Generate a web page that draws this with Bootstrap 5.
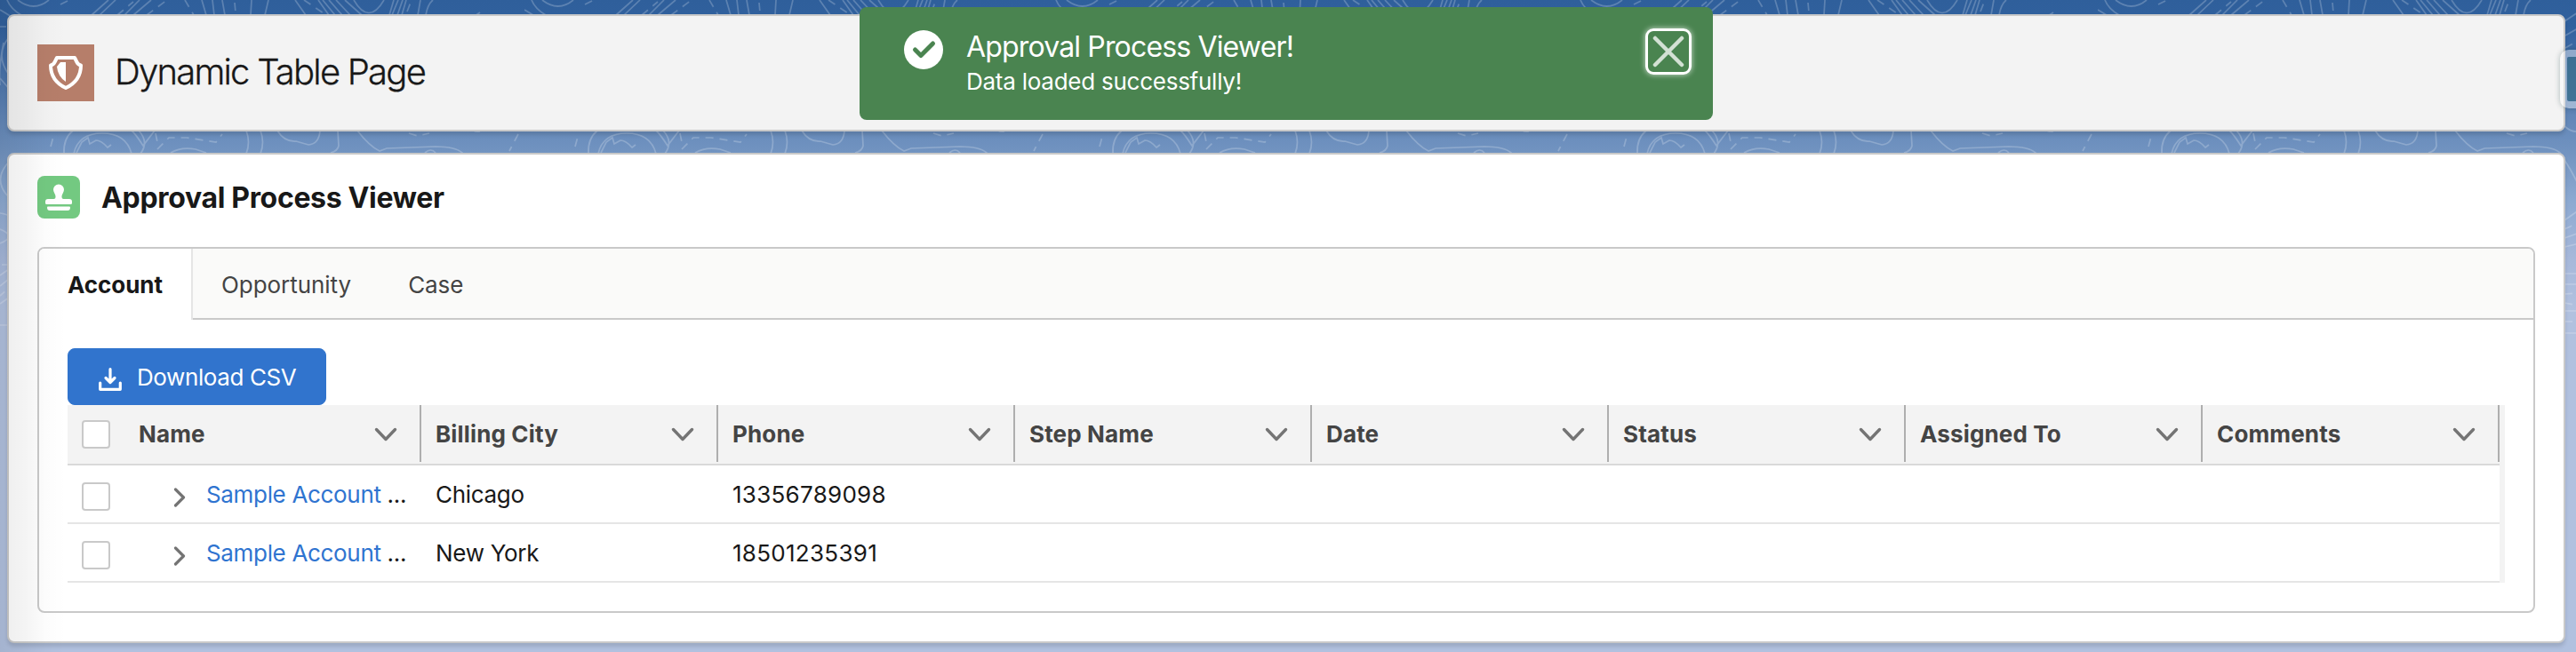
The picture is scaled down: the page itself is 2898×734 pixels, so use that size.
<!DOCTYPE html>
<html lang="en">
<head>
<meta charset="utf-8">
<title>Dynamic Table Page</title>
<link rel="stylesheet" href="https://cdn.jsdelivr.net/npm/bootstrap@5.3.0/dist/css/bootstrap.min.css">
<style>
  body { height: 734px; overflow: hidden; font-family: Inter, "Liberation Sans", sans-serif; font-size: 26px; line-height: 36px; color: #181818;
    background: linear-gradient(#2f5f9b 0, #31619e 30px, #6186b8 130px, #7193c0 170px, #8ca9d1 225px, #a6b8da 290px, #b1c1df 350px); }
  .topo { width: 2898px; height: 380px; z-index: 0; }
  .edge-shade { width: 75px; height: 734px; z-index: 3; pointer-events: none; background: linear-gradient(90deg, rgba(0,0,0,.07), rgba(0,0,0,.045) 28px, rgba(0,0,0,.012) 52px, transparent); }
  .page { padding: 16px 12px 0 8px; gap: 24px; z-index: 1; }
  .panel { border: 2px solid #c9c9c9; border-radius: 8px; box-shadow: 0 4px 4px rgba(0,0,0,.12); }
  .page-head { height: 132px; background: #f3f3f3; padding: 0 32px; }
  .page-head h1 { font-size: 40px; line-height: 48px; font-weight: 300; letter-spacing: -1.78px; margin: -3px 0 0 23px; -webkit-text-stroke: .3px #181818; }
  .viewer { height: 552px; background: #fff; padding: 24px 32px 32px; }
  .viewer h2 { font-size: 32px; line-height: 40px; font-weight: 700; letter-spacing: -.33px; margin: 2px 0 0 24px; }
  .tabset { margin-top: 32px; height: 412px; border: 2px solid #c9c9c9; border-radius: 8px; overflow: hidden; }
  .tabbar { height: 80px; background: #fafaf9; border-bottom: 2px solid #c9c9c9; }
  .tabbar .nav-link { height: 78px; padding: 0 32px; line-height: 81px; color: #444; border-radius: 0; letter-spacing: -.05px; }
  .tabbar .nav-link.active { width: 173px; height: 80px; background: #fff; color: #181818; font-weight: 700; border-right: 2px solid #e5e5e5; }
  .pane { padding: 32px 32px 0; }
  .btn-brand { --bs-btn-bg: #3174cd; --bs-btn-border-color: #3174cd; --bs-btn-color: #fff; width: 291px; height: 64px; border-radius: 8px; font-size: 26px; line-height: 36px; letter-spacing: -.4px; padding: 1px 0 0 34px; gap: 17px; white-space: nowrap; }
  .grid-wrap { width: 2742px; border-right: 6px solid #f3f3f3; }
  .grid-wrap table { table-layout: fixed; width: 2736px; margin: 0; border-collapse: separate; border-spacing: 0; }
  .grid-wrap th, .grid-wrap td { padding: 0 16px; height: 66px; border: 0; border-bottom: 2px solid #e5e5e5; vertical-align: middle; white-space: nowrap; color: #181818; line-height: 36px; }
  .grid-wrap th { height: 68px; border-bottom-color: #d9d9d9; background: #f3f3f3 linear-gradient(#aeaeae, #aeaeae) right top / 2px 64px no-repeat; color: #444; font-weight: 700; letter-spacing: .15px; }
  .grid-wrap th.pick { background-image: none; }
  .grid-wrap th > div { padding-right: 11px; }
  .pick { width: 64px; }
  .box { display: block; width: 32px; height: 32px; border: 2px solid #c9c9c9; border-radius: 4px; background: #fff; }
  td .box { margin-top: 6px; }
  td .line { margin-top: 2px; letter-spacing: -.3px; }
  .tree { padding-left: 39px; }
  .tree svg { flex: none; margin: 5px 23px 0 0; }
  .acct { color: #2f74d0; text-decoration: none; letter-spacing: -.33px; }
  td .digits { letter-spacing: .28px; }
  .alert-toast { left: 967px; top: 8px; width: 960px; height: 127px; background: #4a8450; border-radius: 8px; color: #fff; z-index: 5; padding: 26px 24px 0 50px; gap: 26px; }
  .alert-toast .head { font-size: 32px; line-height: 40px; letter-spacing: -.84px; margin-top: -1px; }
  .alert-toast .body-text { line-height: 36px; letter-spacing: -.25px; margin-top: 1px; }
  .close-x { width: 52px; height: 52px; margin-top: -2px; border: 3px solid #fff; border-radius: 9px; box-shadow: 0 0 6px rgba(255,255,255,.75); background: none; padding: 0; }
  .side-handle { left: 2880px; top: 56px; width: 60px; height: 66px; border: 8px solid rgba(255,255,255,.42); border-radius: 10px; z-index: 4; box-shadow: 0 0 6px rgba(0,50,50,.3); }
  .side-handle i { display: block; height: 50px; background: rgba(60,112,142,.8); border-radius: 3px; }
</style>
</head>
<body class="position-relative">
<svg class="topo position-absolute top-0 start-0" fill="none">
  <defs>
    <pattern id="contours" width="590" height="380" patternUnits="userSpaceOnUse">
      <g fill="none" stroke="#fff" stroke-opacity=".22" stroke-width="1.7">
        <path d="M8 0Q12 10 24 17M20 0Q38 14 55 0M0 11Q12 18 20 24M103 17L122 0M112 17L130 0M140 17L157 0M150 17L170 0M227 0L232 17M239 0L241 17M250 0L253 17M283 0L282 17M302 0L298 17M332 0L344 17M358 0L370 17M363 0L377 17M370 0L385 17M378 0L394 17M388 0L407 17M398 0Q415 29 432 0M438 17L443 0M441 17L448 0M447 17L453 0M452 17L457 0M470 17L473 0M479 17Q481 5 487 0M525 24L540 14M526 40L540 32"/>
        <path stroke-dasharray="9 7" d="M132 17L150 2M165 17L188 0M208 0L218 17M264 3L265 14M342 0L367 17M458 13L463 0M68 5L78 0M526 54L540 46"/>
        <path d="M72 173Q71 156 82 147M83 173Q88 150 115 150T148 173M86 172L92 160L99 155L101 162L108 158Q114 158 121 166L125 163M174 147L161 164Q152 150 148 147M156 147Q168 160 158 173M192 172Q204 165 220 168L232 172M277 147Q282 160 277 173M293 147Q298 160 293 173M312 147Q320 160 333 159L347 163Q359 162 360 147M380 147L381 164Q380 170 372 172M402 147Q416 165 427 170L435 167L490 165Q512 165 520 172Q532 190 542 210M478 172Q485 166 490 172M525 142Q533 149 540 148M525 248L542 236M525 268L542 262M525 278L542 274M525 308H542M525 320H542M525 350H542M525 375H542"/>
        <path stroke-dasharray="9 7" d="M57 165L60 154M175 150L177 160M177 168L190 155L210 155L243 160L250 151M460 150L470 153L483 150M583 151L573 170M525 258L542 250M525 331L542 330M525 341L542 344M525 362H542"/>
        <path d="M10 42Q-6 62 10 84M0 96Q-2 78 4 48M12 180Q-10 202 10 222M0 240Q7 241 10 243M0 258Q20 266 0 274M0 310L10 303M0 322L10 314M0 342L10 335M0 366H10M0 88L12 102"/>
        <path stroke-dasharray="7 5" d="M0 30H8M2 298H10M0 333L10 324"/>
      </g>
    </pattern>
  </defs>
  <rect width="2898" height="380" fill="url(#contours)"/>
</svg>

<main class="page position-relative d-flex flex-column">
  <header class="panel page-head d-flex align-items-center">
    <svg width="64" height="64" viewBox="0 0 64 64"><path fill="#b67e6a" d="M0 0h64v64H0z"/><path fill="none" stroke="#fff" stroke-width="4" stroke-linejoin="round" d="M22 15h20l2.500 5q1.500 3 4.500 3.500Q49 41 32 49Q15 41 15 23.500q3-.5 4.500-3.500z"/><path fill="#fff" d="M32 20h-6l-4 5q1 11 10 17z"/></svg>
    <h1>Dynamic Table Page</h1>
  </header>

  <section class="panel viewer">
    <div class="d-flex align-items-center">
      <svg width="48" height="48" viewBox="0 0 48 48"><rect width="48" height="48" rx="8" fill="#73c981"/><path fill="#fff" d="M24 9.500a6 6 0 0 1 6 6c0 3-2.500 5-2.500 7.500v1q0 2 2 2H36q3 0 3 3v1.500q0 1.500-1.500 1.500h-27Q9 32 9 30.500V29q0-3 3-3h6.500q2 0 2-2v-1c0-2.500-2.500-4.500-2.500-7.500a6 6 0 0 1 6-6zM12 34.500h24q1 0 1 1 0 3.500-3 3.500H14q-3 0-3-3.500 0-1 1-1z"/></svg>
      <h2>Approval Process Viewer</h2>
    </div>
    <div class="tabset">
      <nav class="tabbar nav flex-nowrap">
        <a class="nav-link active" href="#">Account</a>
        <a class="nav-link" href="#">Opportunity</a>
        <a class="nav-link" href="#">Case</a>
      </nav>
      <div class="pane">
        <button class="btn btn-brand d-flex align-items-center">
          <svg class="flex-shrink-0 mt-1" width="26" height="26" viewBox="0 0 26 26" fill="none" stroke="#fff" stroke-width="3.200" stroke-linecap="round" stroke-linejoin="round"><path d="M1.700 17v7.300h22.600V17M13 1.700v14M8 11.500l5 5 5-5"/></svg>
          <span>Download CSV</span>
        </button>
        <div class="grid-wrap">
          <table class="table">
            <thead><tr id="heads"><th class="pick"><span class="box"></span></th></tr></thead>
            <tbody id="rows"></tbody>
          </table>
        </div>
      </div>
    </div>
  </section>
</main>

<div class="edge-shade position-absolute top-0 start-0"></div>

<div class="alert-toast position-absolute d-flex align-items-start" role="alert">
  <svg width="44" height="44" viewBox="0 0 44 44"><circle cx="22" cy="22" r="22" fill="#fff"/><path fill="none" stroke="#4a8450" stroke-width="5" stroke-linecap="round" stroke-linejoin="round" d="M12.500 22l6.500 6.500L32.500 15"/></svg>
  <div class="flex-grow-1">
    <div class="head">Approval Process Viewer!</div>
    <div class="body-text">Data loaded successfully!</div>
  </div>
  <button class="close-x" aria-label="Close"><svg class="d-block mx-auto" width="36" height="36" viewBox="0 0 36 36"><path stroke="#d3e1d4" stroke-width="4.500" stroke-linecap="round" d="M3 3l30 30M33 3L3 33"/></svg></button>
</div>
<div class="side-handle position-absolute"><i></i></div>

<script>
  const heads = ["Name", "Billing City", "Phone", "Step Name", "Date", "Status", "Assigned To", "Comments"];
  const down = '<svg width="26" height="16" viewBox="0 0 26 16"><path d="M2.500 2.500L13 13.500 23.500 2.500" fill="none" stroke="#747474" stroke-width="3.400" stroke-linecap="round" stroke-linejoin="round"/></svg>';
  document.getElementById("heads").innerHTML += heads.map(h =>
    `<th><div class="d-flex align-items-center justify-content-between"><span>${h}</span>${down}</div></th>`).join("");
  const data = [["Chicago", "13356789098"], ["New York", "18501235391"]];
  document.getElementById("rows").innerHTML = data.map(r =>
    `<tr><td class="pick"><span class="box"></span></td>
     <td><div class="d-flex align-items-center line tree"><svg width="14" height="22" viewBox="0 0 14 22"><path d="M2.500 2L11.500 11 2.500 20" fill="none" stroke="#747474" stroke-width="3.200" stroke-linecap="round" stroke-linejoin="round"/></svg><span><a class="acct" href="#">Sample Account</a> ...</span></div></td>
     <td><div class="line">${r[0]}</div></td><td><div class="line digits">${r[1]}</div></td>` + "<td></td>".repeat(5) + "</tr>").join("");
</script>
<script src="https://cdn.jsdelivr.net/npm/bootstrap@5.3.0/dist/js/bootstrap.bundle.min.js"></script>
</body>
</html>
